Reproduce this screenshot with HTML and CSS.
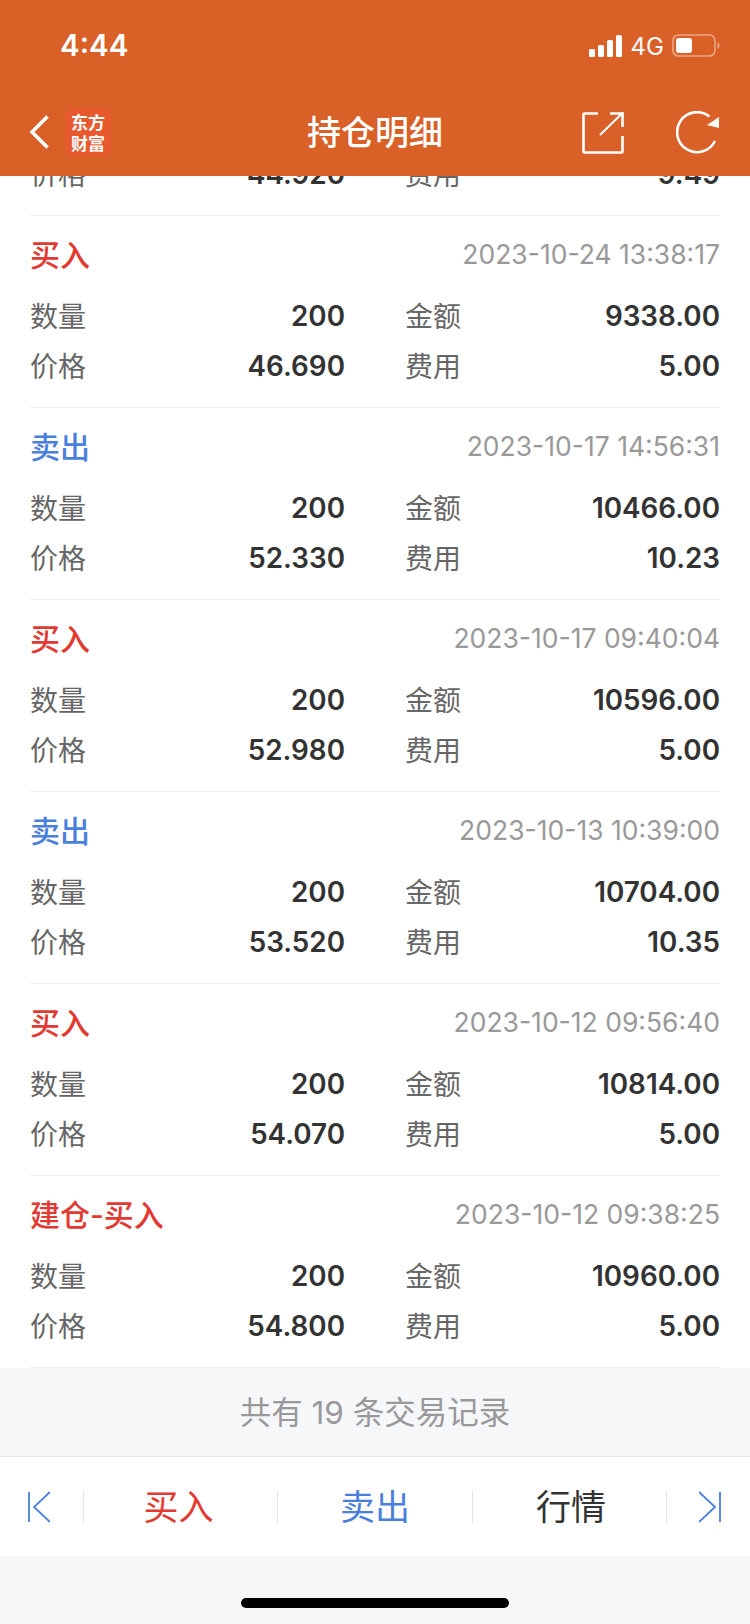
FILE: index.html
```html
<!DOCTYPE html>
<html lang="zh-CN">
<head>
  <meta charset="UTF-8">
  <meta name="viewport" content="width=device-width, initial-scale=1.0">
  <title>持仓明细</title>
  <link rel="stylesheet" href="styles.css">
</head>
<body>
  <div class="page">
    <header class="header">
      <div class="status-bar">
        <span class="time">4:44</span>
        <div class="status-icons">
          <svg class="signal" width="34" height="22" viewBox="0 0 34 22" fill="#fff">
            <rect x="0" y="14" width="6" height="8" rx="1.5"/>
            <rect x="9" y="10" width="6" height="12" rx="1.5"/>
            <rect x="18" y="5" width="6" height="17" rx="1.5"/>
            <rect x="27" y="0" width="6" height="22" rx="1.5"/>
          </svg>
          <span class="network">4G</span>
          <svg class="battery" width="48" height="24" viewBox="0 0 48 24">
            <rect x="1" y="1" width="42" height="21" rx="5.5" fill="none" stroke="#fff" stroke-opacity="0.45" stroke-width="1.6"/>
            <rect x="4" y="4" width="16" height="15" rx="3" fill="#fff"/>
            <path d="M45.5 8 C47 9 47.5 10 47.5 11.5 C47.5 13 47 14 45.5 15 Z" fill="#fff" fill-opacity="0.45"/>
          </svg>
        </div>
      </div>
      <nav class="nav-bar">
        <div class="nav-left">
          <svg width="20" height="34" viewBox="0 0 20 34" fill="none" stroke="#fff" stroke-width="3.5">
            <path d="M18.5 1.5 L3 17 L18.5 32.5"/>
          </svg>
          <div class="logo"><span>东方</span><span>财富</span></div>
        </div>
        <h1 class="nav-title">持仓明细</h1>
        <div class="nav-right">
          <svg width="42" height="42" viewBox="0 0 42 42" fill="none" stroke="#fff" stroke-width="2.6">
            <path d="M16 1.5 H2.5 Q1.5 1.5 1.5 2.5 V39.5 Q1.5 40.5 2.5 40.5 H39.5 Q40.5 40.5 40.5 39.5 V24"/>
            <path d="M18 23 L41 0.5" stroke-width="2"/>
            <path d="M28 1.5 H40.5 V15"/>
          </svg>
          <svg width="44" height="44" viewBox="0 0 44 44" fill="none">
            <path d="M39 30 A20 20 0 1 1 33.5 5.5" stroke="#fff" stroke-width="2.6"/>
            <path d="M43 6 V17 L31 14 Z" fill="#fff"/>
          </svg>
        </div>
      </nav>
    </header>

    <main class="list">
      <div class="track">
        <section class="card card-cut">
          <div class="row">
            <div class="cell"><span class="label">价格</span><span class="value">44.920</span></div>
            <div class="cell"><span class="label">费用</span><span class="value">9.49</span></div>
          </div>
        </section>

        <section class="card">
          <div class="card-head"><span class="kind buy">买入</span><span class="date">2023-10-24 13:38:17</span></div>
          <div class="row">
            <div class="cell"><span class="label">数量</span><span class="value">200</span></div>
            <div class="cell"><span class="label">金额</span><span class="value">9338.00</span></div>
          </div>
          <div class="row">
            <div class="cell"><span class="label">价格</span><span class="value">46.690</span></div>
            <div class="cell"><span class="label">费用</span><span class="value">5.00</span></div>
          </div>
        </section>

        <section class="card">
          <div class="card-head"><span class="kind sell">卖出</span><span class="date">2023-10-17 14:56:31</span></div>
          <div class="row">
            <div class="cell"><span class="label">数量</span><span class="value">200</span></div>
            <div class="cell"><span class="label">金额</span><span class="value">10466.00</span></div>
          </div>
          <div class="row">
            <div class="cell"><span class="label">价格</span><span class="value">52.330</span></div>
            <div class="cell"><span class="label">费用</span><span class="value">10.23</span></div>
          </div>
        </section>

        <section class="card">
          <div class="card-head"><span class="kind buy">买入</span><span class="date">2023-10-17 09:40:04</span></div>
          <div class="row">
            <div class="cell"><span class="label">数量</span><span class="value">200</span></div>
            <div class="cell"><span class="label">金额</span><span class="value">10596.00</span></div>
          </div>
          <div class="row">
            <div class="cell"><span class="label">价格</span><span class="value">52.980</span></div>
            <div class="cell"><span class="label">费用</span><span class="value">5.00</span></div>
          </div>
        </section>

        <section class="card">
          <div class="card-head"><span class="kind sell">卖出</span><span class="date">2023-10-13 10:39:00</span></div>
          <div class="row">
            <div class="cell"><span class="label">数量</span><span class="value">200</span></div>
            <div class="cell"><span class="label">金额</span><span class="value">10704.00</span></div>
          </div>
          <div class="row">
            <div class="cell"><span class="label">价格</span><span class="value">53.520</span></div>
            <div class="cell"><span class="label">费用</span><span class="value">10.35</span></div>
          </div>
        </section>

        <section class="card">
          <div class="card-head"><span class="kind buy">买入</span><span class="date">2023-10-12 09:56:40</span></div>
          <div class="row">
            <div class="cell"><span class="label">数量</span><span class="value">200</span></div>
            <div class="cell"><span class="label">金额</span><span class="value">10814.00</span></div>
          </div>
          <div class="row">
            <div class="cell"><span class="label">价格</span><span class="value">54.070</span></div>
            <div class="cell"><span class="label">费用</span><span class="value">5.00</span></div>
          </div>
        </section>

        <section class="card">
          <div class="card-head"><span class="kind buy">建仓-买入</span><span class="date">2023-10-12 09:38:25</span></div>
          <div class="row">
            <div class="cell"><span class="label">数量</span><span class="value">200</span></div>
            <div class="cell"><span class="label">金额</span><span class="value">10960.00</span></div>
          </div>
          <div class="row">
            <div class="cell"><span class="label">价格</span><span class="value">54.800</span></div>
            <div class="cell"><span class="label">费用</span><span class="value">5.00</span></div>
          </div>
        </section>
      </div>
    </main>

    <div class="count">共有 19 条交易记录</div>

    <div class="toolbar">
      <div class="tool tool-first">
        <svg width="22" height="32" viewBox="0 0 22 32" fill="none" stroke="#4a7fde" stroke-width="1.8">
          <path d="M1 1 V31"/>
          <path d="M22 1 L6 16 L22 31"/>
        </svg>
      </div>
      <div class="tool tool-text tool-buy buy">买入</div>
      <div class="tool tool-text sell">卖出</div>
      <div class="tool tool-text tool-market dark">行情</div>
      <div class="tool tool-last">
        <svg width="22" height="32" viewBox="0 0 22 32" fill="none" stroke="#4a7fde" stroke-width="1.8">
          <path d="M21 1 V31"/>
          <path d="M0 1 L16 16 L0 31"/>
        </svg>
      </div>
    </div>

    <div class="home-area"><div class="home-bar"></div></div>
  </div>
</body>
</html>
```

FILE: styles.css
```css
* {
  box-sizing: border-box;
}

body {
  margin: 0;
  font-family: Inter, "Noto Sans CJK SC", sans-serif;
  background-color: #f6f7f9;
}

.page {
  width: 750px;
  height: 1624px;
  display: flex;
  flex-direction: column;
  overflow: hidden;
}

/* header */
.header {
  height: 176px;
  flex-shrink: 0;
  background-color: #d96027;
  color: #fff;
}

.status-bar {
  height: 88px;
  display: flex;
  justify-content: space-between;
  align-items: center;
  padding: 2px 30px 0 60px;
}

.time {
  font-size: 29.5px;
  font-weight: 600;
}

.status-icons {
  display: flex;
  align-items: center;
  padding-top: 2px;
}

.network {
  margin-left: 8px;
  margin-right: 8px;
  font-size: 24px;
}

.nav-bar {
  height: 88px;
  position: relative;
  display: flex;
  justify-content: space-between;
  align-items: center;
  padding: 0 30px 0 29px;
}

.nav-left {
  display: flex;
  align-items: center;
  gap: 16px;
}

.logo {
  width: 46px;
  height: 47px;
  border-radius: 9px;
  background-color: #e9592e;
  display: flex;
  flex-direction: column;
  align-items: center;
  justify-content: center;
  font-family: "Noto Sans CJK SC", sans-serif;
  font-size: 17px;
  font-weight: 700;
  line-height: 21px;
}

.nav-title {
  position: absolute;
  left: 0;
  right: 0;
  top: 19px;
  margin: 0;
  text-align: center;
  font-size: 34px;
  line-height: 52px;
  font-weight: 500;
}

.nav-right {
  display: flex;
  align-items: center;
  gap: 52px;
  padding-top: 2px;
}

/* list */
.list {
  height: 1192px;
  flex-shrink: 0;
  background-color: #fff;
  overflow: hidden;
}

.track {
  margin-top: -27px;
  padding: 0 30px;
}

.card {
  height: 192px;
  padding-top: 17px;
  border-bottom: 1px solid #eee;
}

.card-cut {
  height: 67px;
  padding-top: 0;
}

.card-head {
  height: 40px;
  margin-bottom: 18px;
  display: flex;
  justify-content: space-between;
  align-items: center;
}

.kind {
  font-size: 30px;
  font-weight: 500;
}

.buy {
  color: #e23a33;
}

.sell {
  color: #4a7fde;
}

.dark {
  color: #333;
}

.date {
  font-size: 26.5px;
  padding-top: 1px;
  color: #999;
}

.row {
  height: 50px;
  display: grid;
  grid-template-columns: 315px 315px;
  justify-content: space-between;
}

.cell {
  display: flex;
  justify-content: space-between;
  align-items: center;
}

.label {
  font-size: 28px;
  color: #666;
  padding-bottom: 2px;
}

.value {
  font-size: 27.8px;
  font-weight: 600;
  color: #333;
}

/* bottom */
.count {
  height: 89px;
  flex-shrink: 0;
  border-bottom: 1px solid #e9e9eb;
  padding-bottom: 5px;
  display: flex;
  justify-content: center;
  align-items: center;
  font-size: 31.5px;
  color: #999;
}

.toolbar {
  height: 99px;
  flex-shrink: 0;
  background-color: #fff;
  display: grid;
  grid-template-columns: 84px 194px 195px 194px 83px;
  align-items: center;
}

.tool {
  height: 34px;
  display: flex;
  justify-content: center;
  align-items: center;
  border-right: 1px solid #e6e6e6;
}

.tool-text {
  font-size: 35px;
  padding-bottom: 4px;
}

.tool-buy {
  padding-right: 4px;
}

.tool-market {
  padding-left: 3px;
}

.tool-first svg {
  margin-right: 6px;
}

.tool-last {
  border-right: none;
}

.tool-last svg {
  margin-left: 2px;
}

.home-area {
  flex: 1;
  display: flex;
  justify-content: center;
  padding-top: 42px;
}

.home-bar {
  width: 268px;
  height: 10px;
  border-radius: 5px;
  background-color: #000;
}
```
